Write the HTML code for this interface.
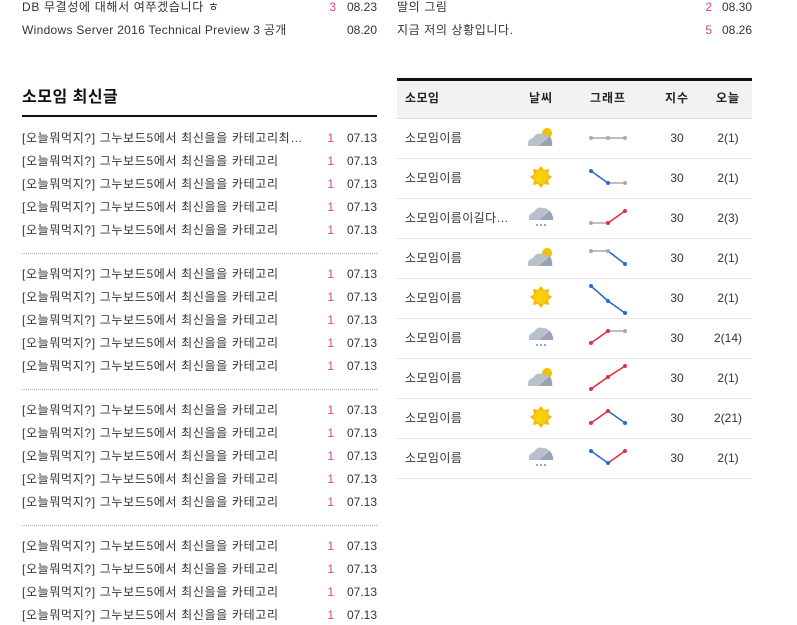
<!DOCTYPE html>
<html><head><meta charset="utf-8">
<style>
body{margin:0;width:797px;height:625px;background:#fff;overflow:hidden;position:relative;font-family:"Liberation Sans","Noto Sans CJK KR","NanumGothic",sans-serif;font-size:12px;color:#333}
.r{position:absolute;height:16px;line-height:16px;white-space:nowrap}
.l{left:22px;letter-spacing:0.65px}
.c{position:absolute;color:#d04a86;text-align:right;width:20px}
.d{position:absolute;text-align:right;width:40px}
.dot{position:absolute;left:22px;width:355px;border-top:1px dotted #aaa}
.t{position:absolute;left:405px;height:16px;line-height:16px;letter-spacing:0.4px}
.n{position:absolute;width:40px;text-align:center;letter-spacing:0}
</style></head><body>
<div class="r l" style="top:-1px">DB 무결성에 대해서 여쭈겠습니다 ㅎ</div><div class="c" style="left:316px;top:-1px;line-height:16px">3</div><div class="d" style="left:337px;top:-1px;line-height:16px">08.23</div>
<div class="r l" style="top:22px;letter-spacing:0.3px">Windows Server 2016 Technical Preview 3 공개</div><div class="d" style="left:337px;top:22px;line-height:16px">08.20</div>
<div class="r" style="left:397px;top:-1px;letter-spacing:0.6px">딸의 그림</div><div class="c" style="left:692px;top:-1px;line-height:16px">2</div><div class="d" style="left:712px;top:-1px;line-height:16px">08.30</div>
<div class="r" style="left:397px;top:22px;letter-spacing:0.6px">지금 저의 상황입니다.</div><div class="c" style="left:692px;top:22px;line-height:16px">5</div><div class="d" style="left:712px;top:22px;line-height:16px">08.26</div>

<div class="r" style="left:22px;top:88px;font-size:16px;font-weight:bold;color:#111;height:20px;line-height:20px;letter-spacing:0.5px">소모임 최신글</div>
<div style="position:absolute;left:22px;top:115px;width:355px;height:2px;background:#111"></div>

<div class="r l" style="top:130px">[오늘뭐먹지?] 그누보드5에서 최신을을 카테고리최…</div>
<div class="r l" style="top:153px">[오늘뭐먹지?] 그누보드5에서 최신을을 카테고리</div>
<div class="r l" style="top:176px">[오늘뭐먹지?] 그누보드5에서 최신을을 카테고리</div>
<div class="r l" style="top:199px">[오늘뭐먹지?] 그누보드5에서 최신을을 카테고리</div>
<div class="r l" style="top:222px">[오늘뭐먹지?] 그누보드5에서 최신을을 카테고리</div>
<div class="dot" style="top:253px"></div>
<div class="r l" style="top:266px">[오늘뭐먹지?] 그누보드5에서 최신을을 카테고리</div>
<div class="r l" style="top:289px">[오늘뭐먹지?] 그누보드5에서 최신을을 카테고리</div>
<div class="r l" style="top:312px">[오늘뭐먹지?] 그누보드5에서 최신을을 카테고리</div>
<div class="r l" style="top:335px">[오늘뭐먹지?] 그누보드5에서 최신을을 카테고리</div>
<div class="r l" style="top:358px">[오늘뭐먹지?] 그누보드5에서 최신을을 카테고리</div>
<div class="dot" style="top:389px"></div>
<div class="r l" style="top:402px">[오늘뭐먹지?] 그누보드5에서 최신을을 카테고리</div>
<div class="r l" style="top:425px">[오늘뭐먹지?] 그누보드5에서 최신을을 카테고리</div>
<div class="r l" style="top:448px">[오늘뭐먹지?] 그누보드5에서 최신을을 카테고리</div>
<div class="r l" style="top:471px">[오늘뭐먹지?] 그누보드5에서 최신을을 카테고리</div>
<div class="r l" style="top:494px">[오늘뭐먹지?] 그누보드5에서 최신을을 카테고리</div>
<div class="dot" style="top:525px"></div>
<div class="r l" style="top:538px">[오늘뭐먹지?] 그누보드5에서 최신을을 카테고리</div>
<div class="r l" style="top:561px">[오늘뭐먹지?] 그누보드5에서 최신을을 카테고리</div>
<div class="r l" style="top:584px">[오늘뭐먹지?] 그누보드5에서 최신을을 카테고리</div>
<div class="r l" style="top:607px">[오늘뭐먹지?] 그누보드5에서 최신을을 카테고리</div>

<div style="position:absolute;left:314px;top:0;width:63px;line-height:16px">
<div class="r c" style="top:130px">1</div><div class="r d" style="left:23px;top:130px">07.13</div>
<div class="r c" style="top:153px">1</div><div class="r d" style="left:23px;top:153px">07.13</div>
<div class="r c" style="top:176px">1</div><div class="r d" style="left:23px;top:176px">07.13</div>
<div class="r c" style="top:199px">1</div><div class="r d" style="left:23px;top:199px">07.13</div>
<div class="r c" style="top:222px">1</div><div class="r d" style="left:23px;top:222px">07.13</div>
<div class="r c" style="top:266px">1</div><div class="r d" style="left:23px;top:266px">07.13</div>
<div class="r c" style="top:289px">1</div><div class="r d" style="left:23px;top:289px">07.13</div>
<div class="r c" style="top:312px">1</div><div class="r d" style="left:23px;top:312px">07.13</div>
<div class="r c" style="top:335px">1</div><div class="r d" style="left:23px;top:335px">07.13</div>
<div class="r c" style="top:358px">1</div><div class="r d" style="left:23px;top:358px">07.13</div>
<div class="r c" style="top:402px">1</div><div class="r d" style="left:23px;top:402px">07.13</div>
<div class="r c" style="top:425px">1</div><div class="r d" style="left:23px;top:425px">07.13</div>
<div class="r c" style="top:448px">1</div><div class="r d" style="left:23px;top:448px">07.13</div>
<div class="r c" style="top:471px">1</div><div class="r d" style="left:23px;top:471px">07.13</div>
<div class="r c" style="top:494px">1</div><div class="r d" style="left:23px;top:494px">07.13</div>
<div class="r c" style="top:538px">1</div><div class="r d" style="left:23px;top:538px">07.13</div>
<div class="r c" style="top:561px">1</div><div class="r d" style="left:23px;top:561px">07.13</div>
<div class="r c" style="top:584px">1</div><div class="r d" style="left:23px;top:584px">07.13</div>
<div class="r c" style="top:607px">1</div><div class="r d" style="left:23px;top:607px">07.13</div>
</div>

<div style="position:absolute;left:397px;top:78px;width:355px;height:3px;background:#111"></div>
<div style="position:absolute;left:397px;top:81px;width:355px;height:37px;background:#f2f2f2;border-bottom:1px solid #ddd"></div>
<div style="position:absolute;left:397px;top:158px;width:355px;height:1px;background:#e8e8e8;box-shadow:0 40px 0 #e8e8e8,0 80px 0 #e8e8e8,0 120px 0 #e8e8e8,0 160px 0 #e8e8e8,0 200px 0 #e8e8e8,0 240px 0 #e8e8e8,0 280px 0 #e8e8e8,0 320px 0 #e8e8e8"></div>
<div style="font-weight:bold;color:#222">
<div class="t" style="top:90px">소모임</div>
<div class="t n" style="left:521px;top:90px;letter-spacing:1px">날씨</div>
<div class="t n" style="left:584px;top:90px;width:48px;letter-spacing:1px">그래프</div>
<div class="t n" style="left:657px;top:90px;letter-spacing:1px">지수</div>
<div class="t n" style="left:708px;top:90px;letter-spacing:1px">오늘</div>
</div>
<div class="t" style="top:130px">소모임이름</div>
<div class="t" style="top:170px">소모임이름</div>
<div class="t" style="top:210px">소모임이름이길다…</div>
<div class="t" style="top:250px">소모임이름</div>
<div class="t" style="top:290px">소모임이름</div>
<div class="t" style="top:330px">소모임이름</div>
<div class="t" style="top:370px">소모임이름</div>
<div class="t" style="top:410px">소모임이름</div>
<div class="t" style="top:450px">소모임이름</div>
<div style="position:absolute;left:0;top:0">
<div class="t n" style="left:657px;top:130px">30</div><div class="t n" style="left:708px;top:130px">2(1)</div>
<div class="t n" style="left:657px;top:170px">30</div><div class="t n" style="left:708px;top:170px">2(1)</div>
<div class="t n" style="left:657px;top:210px">30</div><div class="t n" style="left:708px;top:210px">2(3)</div>
<div class="t n" style="left:657px;top:250px">30</div><div class="t n" style="left:708px;top:250px">2(1)</div>
<div class="t n" style="left:657px;top:290px">30</div><div class="t n" style="left:708px;top:290px">2(1)</div>
<div class="t n" style="left:657px;top:330px">30</div><div class="t n" style="left:708px;top:330px">2(14)</div>
<div class="t n" style="left:657px;top:370px">30</div><div class="t n" style="left:708px;top:370px">2(1)</div>
<div class="t n" style="left:657px;top:410px">30</div><div class="t n" style="left:708px;top:410px">2(21)</div>
<div class="t n" style="left:657px;top:450px">30</div><div class="t n" style="left:708px;top:450px">2(1)</div>
</div>

<svg width="797" height="625" style="position:absolute;left:0;top:0" xmlns="http://www.w3.org/2000/svg">
<defs>
<g id="cs"><polygon points="0,-5 1.9,-4.6 3.5,-3.5 4.6,-1.9 5,0 4.6,1.9 3.5,3.5 1.9,4.6 0,5 -1.9,4.6 -3.5,3.5 -4.6,1.9 -5,0 -4.6,-1.9 -3.5,-3.5 -1.9,-4.6" transform="translate(6,-4)" fill="#f2c200"/>
<path d="M-13,9 Q-14,2 -8,1 Q-5,-5 2,-3 Q8,-3 9,3 Q12,5 11,9 Z" fill="#b8c0cc"/><path d="M-2,9 L9,-1 Q12,5 11,9Z" fill="#9aa2b2"/></g>
<g id="sn"><polygon points="0,-11 3,-7 8,-8 7,-3 11,0 7,3 8,8 3,7 0,11 -3,7 -8,8 -7,3 -11,0 -7,-3 -8,-8 -3,-7" fill="#f5b800"/><circle r="7" fill="#f7cf10"/></g>
<g id="rn"><path d="M-12,4 Q-13,-3 -7,-4 Q-4,-10 2,-8 Q9,-8 10,-1 Q13,1 12,4 Z" fill="#b8c0cc"/><path d="M-2,4 L9,-5 Q13,1 12,4Z" fill="#9aa2b2"/><circle cx="-4" cy="9" r="1.1" fill="#7aa0e0"/><circle cx="0" cy="9" r="1.1" fill="#7aa0e0"/><circle cx="4" cy="9" r="1.1" fill="#7aa0e0"/></g>
</defs>
<use href="#cs" x="541" y="137"/><use href="#sn" x="541" y="177"/><use href="#rn" x="541" y="216"/>
<use href="#cs" x="541" y="257"/><use href="#sn" x="541" y="297"/><use href="#rn" x="541" y="336"/>
<use href="#cs" x="541" y="377"/><use href="#sn" x="541" y="417"/><use href="#rn" x="541" y="456"/>
<g stroke-width="1.6" fill="none">
<path d="M591,138 L625,138" stroke="#aaa"/>
<path d="M591,171 L608,183" stroke="#2a6cc8"/><path d="M608,183 L625,183" stroke="#aaa"/>
<path d="M591,223 L608,223" stroke="#aaa"/><path d="M608,223 L625,211" stroke="#e03040"/>
<path d="M591,251 L608,251" stroke="#aaa"/><path d="M608,251 L625,264" stroke="#2a6cc8"/>
<path d="M591,286 L608,301 L625,313" stroke="#2a6cc8"/>
<path d="M591,343 L608,331" stroke="#e03040"/><path d="M608,331 L625,331" stroke="#aaa"/>
<path d="M591,389 L608,377 L625,366" stroke="#e03040"/>
<path d="M591,423 L608,411" stroke="#e03040"/><path d="M608,411 L625,423" stroke="#2a6cc8"/>
<path d="M591,451 L608,463" stroke="#2a6cc8"/><path d="M608,463 L625,451" stroke="#e03040"/>
</g>
<g>
<circle cx="591" cy="138" r="2" fill="#aaa"/><circle cx="608" cy="138" r="2" fill="#aaa"/><circle cx="625" cy="138" r="2" fill="#aaa"/>
<circle cx="591" cy="171" r="2" fill="#2a6cc8"/><circle cx="608" cy="183" r="2" fill="#2a6cc8"/><circle cx="625" cy="183" r="2" fill="#aaa"/>
<circle cx="591" cy="223" r="2" fill="#aaa"/><circle cx="608" cy="223" r="2" fill="#e03040"/><circle cx="625" cy="211" r="2" fill="#e03040"/>
<circle cx="591" cy="251" r="2" fill="#aaa"/><circle cx="608" cy="251" r="2" fill="#aaa"/><circle cx="625" cy="264" r="2" fill="#2a6cc8"/>
<circle cx="591" cy="286" r="2" fill="#2a6cc8"/><circle cx="608" cy="301" r="2" fill="#2a6cc8"/><circle cx="625" cy="313" r="2" fill="#2a6cc8"/>
<circle cx="591" cy="343" r="2" fill="#e03040"/><circle cx="608" cy="331" r="2" fill="#e03040"/><circle cx="625" cy="331" r="2" fill="#aaa"/>
<circle cx="591" cy="389" r="2" fill="#e03040"/><circle cx="608" cy="377" r="2" fill="#e03040"/><circle cx="625" cy="366" r="2" fill="#e03040"/>
<circle cx="591" cy="423" r="2" fill="#e03040"/><circle cx="608" cy="411" r="2" fill="#e03040"/><circle cx="625" cy="423" r="2" fill="#2a6cc8"/>
<circle cx="591" cy="451" r="2" fill="#2a6cc8"/><circle cx="608" cy="463" r="2" fill="#2a6cc8"/><circle cx="625" cy="451" r="2" fill="#e03040"/>
</g>
</svg>
</body></html>
